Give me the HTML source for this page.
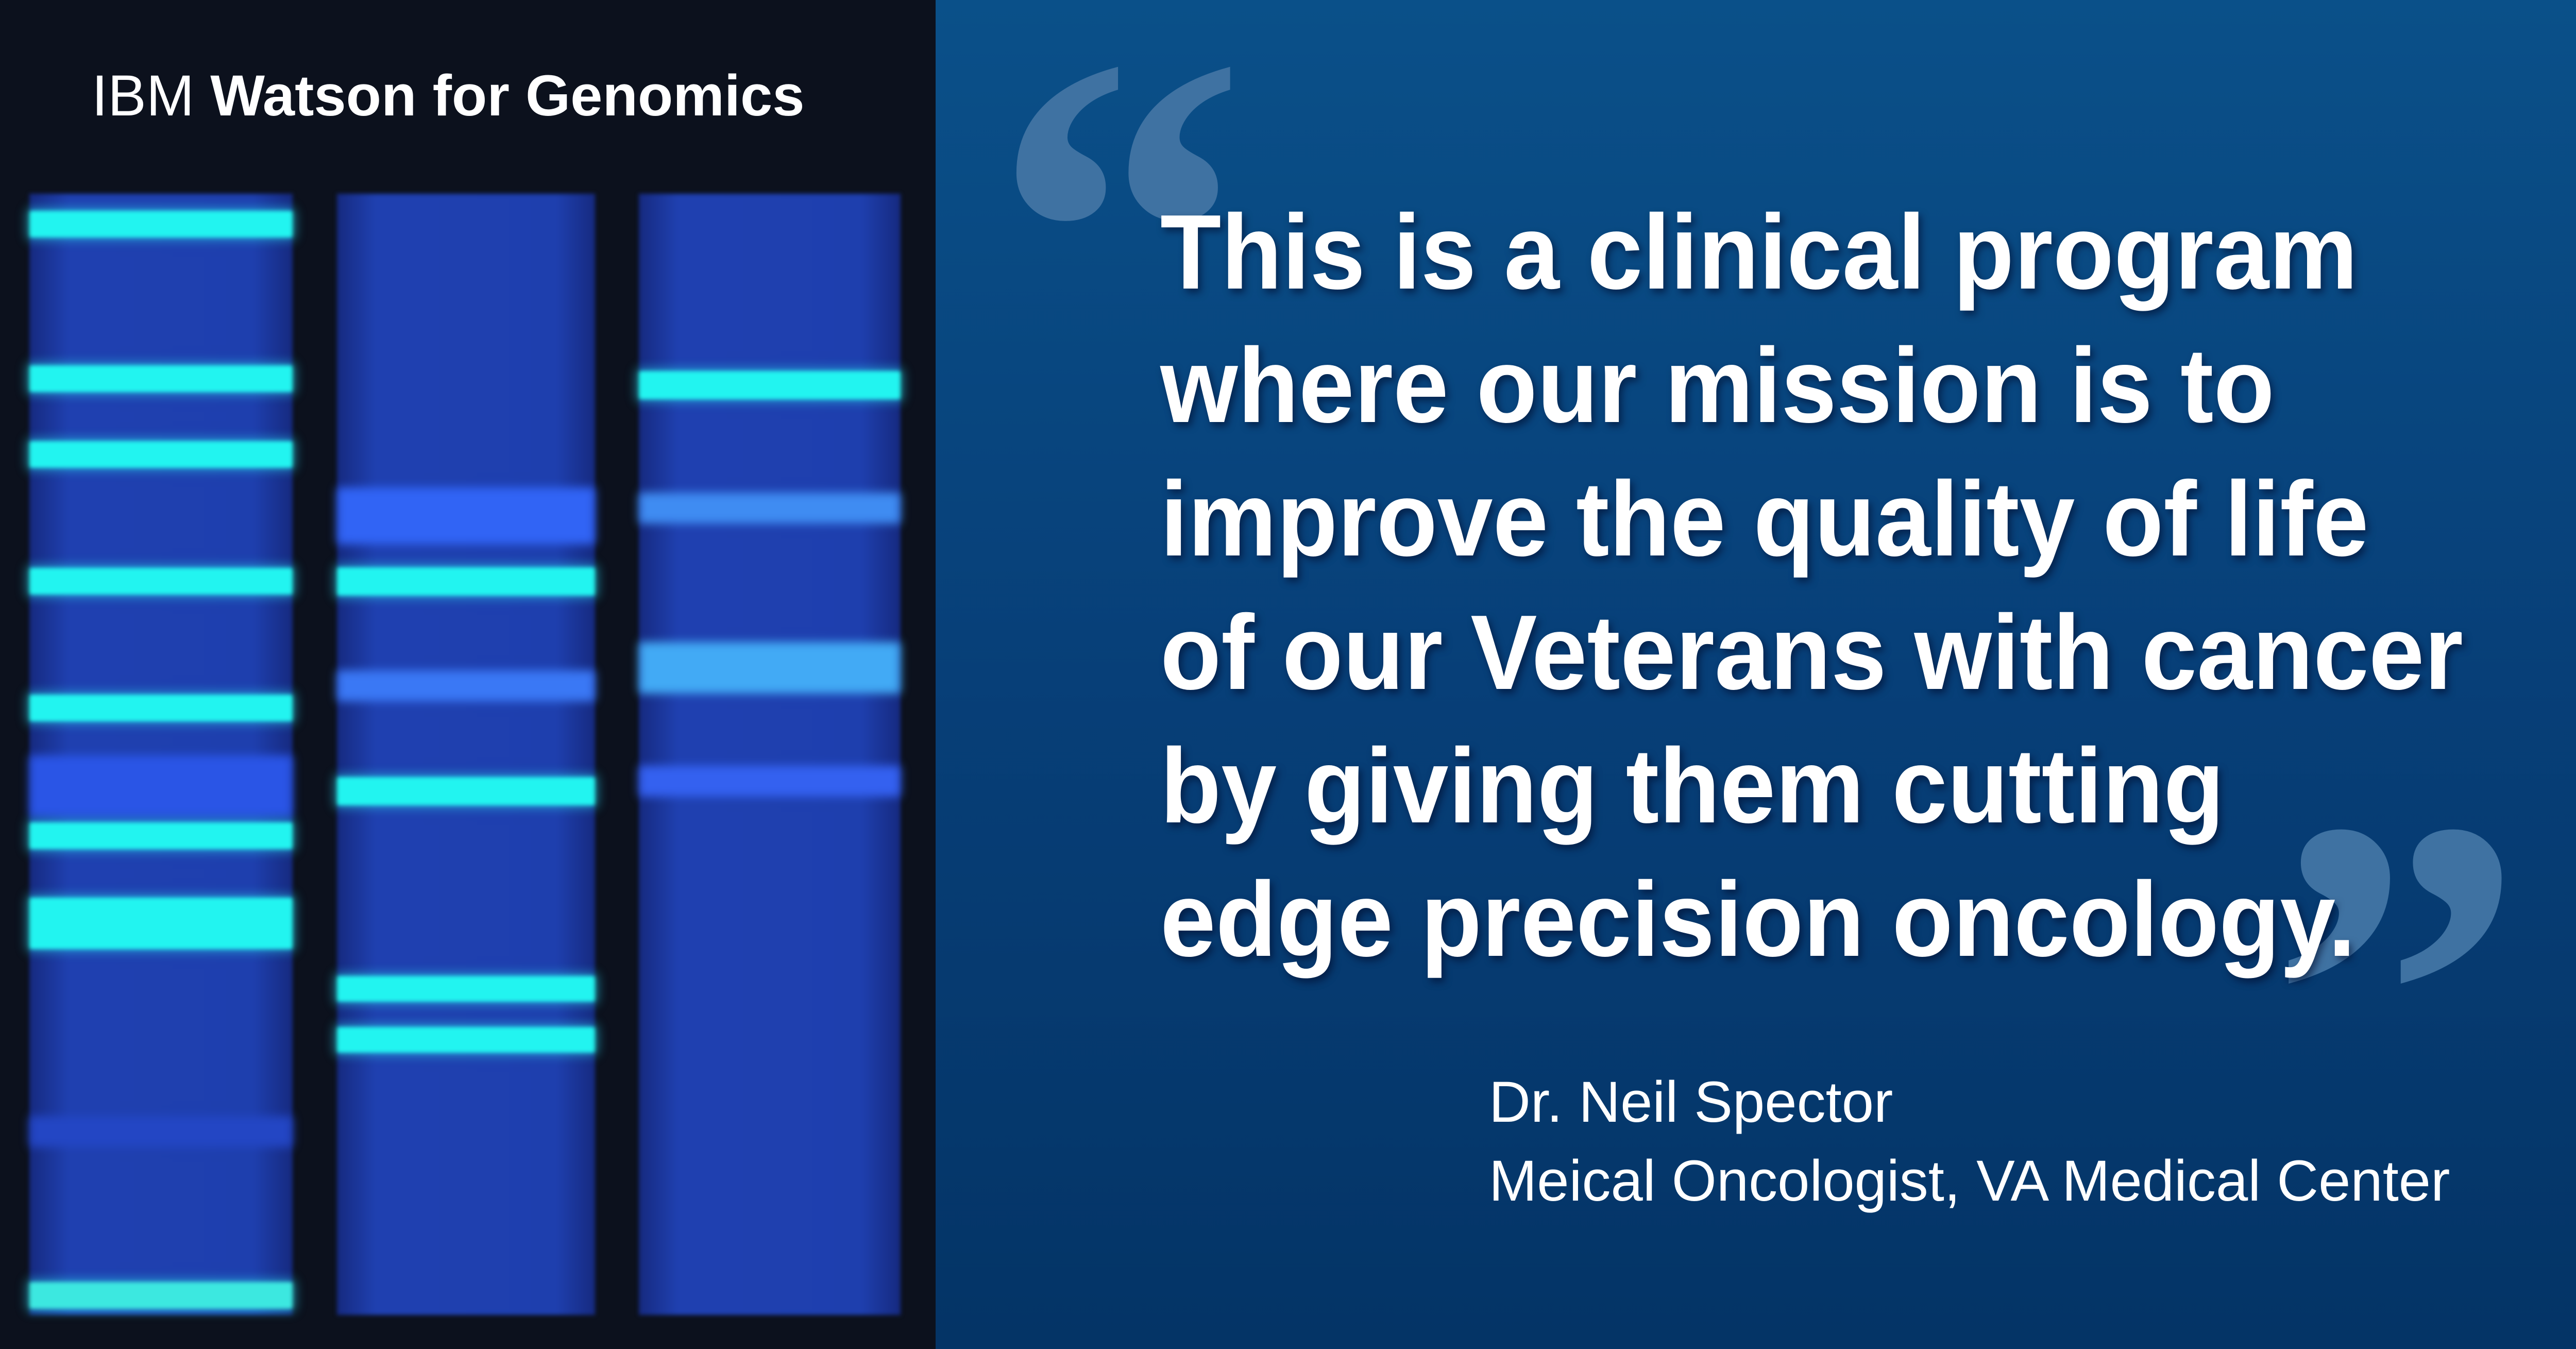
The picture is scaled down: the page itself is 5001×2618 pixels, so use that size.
<!DOCTYPE html>
<html><head><meta charset="utf-8"><style>
*{margin:0;padding:0;box-sizing:border-box}
html,body{width:5001px;height:2618px;overflow:hidden}
body{position:relative;background:#0c111d;font-family:"Liberation Sans",sans-serif}
.left{position:absolute;left:0;top:0;width:1816px;height:2618px;background:#0c111d}
.right{position:absolute;left:1816px;top:0;width:3185px;height:2618px;background:linear-gradient(#0a5089,#073f78 50%,#043466)}
.lane{position:absolute;top:376px;height:2176px;background:linear-gradient(90deg,#162a80,#1f40b0 15%,#1e3fae 85%,#162a80);filter:blur(4px)}
.b{position:absolute;left:0;right:0;border-radius:4px}
.c{background:#22f4f0;box-shadow:0 0 18px 6px rgba(40,200,230,.55)}
.s{background:#2e5ff2;filter:blur(8px)}
.t{position:absolute;color:#fff;white-space:nowrap}
.q{position:absolute;left:2252px;top:360px;font-weight:bold;font-size:206px;line-height:259px;color:#fff;text-shadow:6px 8px 14px rgba(0,10,40,.55);white-space:nowrap;transform:scaleX(0.94);transform-origin:0 0}
.mark{position:absolute;font-family:"Liberation Serif",serif;font-weight:bold;color:#3f72a2;font-size:990px;line-height:1}
</style></head><body>
<div class="left">
 <div class="t" style="left:178px;top:116px;font-size:112px;line-height:140px"><span style="font-weight:300">IBM</span> <b>Watson for Genomics</b></div>
 <div class="lane" style="left:57px;width:511px">
  <div class="b s" style="top:1090px;height:120px;background:#2a55e6"></div>
  <div class="b s" style="top:1790px;height:60px;background:#2346c4"></div>
  <div class="b c" style="top:33px;height:52px"></div>
  <div class="b c" style="top:333px;height:52px"></div>
  <div class="b c" style="top:480px;height:52px"></div>
  <div class="b c" style="top:726px;height:52px"></div>
  <div class="b c" style="top:972px;height:52px"></div>
  <div class="b c" style="top:1220px;height:52px"></div>
  <div class="b c" style="top:1366px;height:100px"></div>
  <div class="b c" style="top:2112px;height:52px;background:#3ce8e0"></div>
 </div>
 <div class="lane" style="left:654px;width:501px">
  <div class="b s" style="top:570px;height:110px;background:#3164f5"></div>
  <div class="b s" style="top:925px;height:60px;background:#3a78f5"></div>
  <div class="b c" style="top:725px;height:55px"></div>
  <div class="b c" style="top:1132px;height:55px"></div>
  <div class="b c" style="top:1518px;height:50px"></div>
  <div class="b c" style="top:1617px;height:50px"></div>
 </div>
 <div class="lane" style="left:1240px;width:508px">
  <div class="b c" style="top:344px;height:55px"></div>
  <div class="b s" style="top:580px;height:60px;background:#3f8cf2"></div>
  <div class="b s" style="top:870px;height:100px;background:#42aaf5"></div>
  <div class="b s" style="top:1110px;height:60px;background:#3461f0"></div>
 </div>
</div>
<div class="right"></div>
<div class="mark" style="left:1925px;top:-40px">“</div>
<div class="mark" style="left:4405px;top:1440px">”</div>
<div class="q">This is a clinical program<br>where our mission is to<br>improve the quality of life<br>of our Veterans with cancer<br>by giving them cutting<br>edge precision oncology.</div>
<div class="t" style="left:2890px;top:2062px;font-size:112px;line-height:153px;font-weight:300">Dr. Neil Spector<br>Meical Oncologist, VA Medical Center</div>
</body></html>
